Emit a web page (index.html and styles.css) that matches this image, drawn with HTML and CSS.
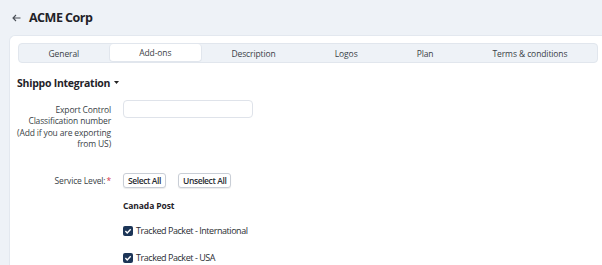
FILE: index.html
```html
<!DOCTYPE html>
<html lang="en">
<head>
  <meta charset="UTF-8">
  <meta name="viewport" content="width=device-width, initial-scale=1.0">
  <title>ACME Corp</title>
  <link rel="stylesheet" href="styles.css">
</head>
<body>
  <header class="page-head">
    <a class="back" href="#">
      <svg width="9" height="8" viewBox="0 0 9 8"><path d="M8.5 4H1M4 1L1 4l3 3" fill="none" stroke="#4a4f57" stroke-width="1.1"/></svg>
    </a>
    <h1>ACME Corp</h1>
  </header>

  <div class="card">
    <nav class="tabs">
      <a class="tab" href="#">General</a>
      <a class="tab active" href="#">Add-ons</a>
      <a class="tab" href="#">Description</a>
      <a class="tab" href="#">Logos</a>
      <a class="tab" href="#">Plan</a>
      <a class="tab" href="#">Terms &amp; conditions</a>
    </nav>

    <h2 class="section-title">Shippo Integration
      <svg width="5" height="4" viewBox="0 0 5 4"><path d="M0 0h5L2.5 3z" fill="#222"/></svg>
    </h2>

    <div class="form">
      <div class="row">
        <label class="label">Export Control<br>Classification number<br>(Add if you are exporting<br>from US)</label>
        <div class="field"><input class="input" type="text"></div>
      </div>

      <div class="row row-service">
        <label class="label">Service Level:<span class="req">*</span></label>
        <div class="field">
          <div class="btns">
            <button class="btn">Select All</button>
            <button class="btn">Unselect All</button>
          </div>
          <div class="carrier">Canada Post</div>
          <label class="check"><span class="box"><svg width="10" height="10" viewBox="0 0 10 10"><rect width="10" height="10" rx="2" fill="#1c3557"/><path d="M2.4 5.1l1.8 1.8 3.5-3.7" fill="none" stroke="#fff" stroke-width="1.4"/></svg></span>Tracked Packet - International</label>
          <label class="check"><span class="box"><svg width="10" height="10" viewBox="0 0 10 10"><rect width="10" height="10" rx="2" fill="#1c3557"/><path d="M2.4 5.1l1.8 1.8 3.5-3.7" fill="none" stroke="#fff" stroke-width="1.4"/></svg></span>Tracked Packet - USA</label>
        </div>
      </div>
    </div>
  </div>
</body>
</html>
```

FILE: styles.css
```css
/* Basis */
* { box-sizing: border-box; }

body {
  margin: 0;
  background-color: #eef2f7;
  font-family: "Open Sans", "Noto Sans", sans-serif;
  color: #2a2d33;
  overflow: hidden;
}

/* Hlavička */
.page-head {
  display: flex;
  align-items: center;
  height: 35px;
  padding: 0 0 0 12px;
}
.page-head .back {
  display: flex;
  margin-right: 8px;
}
.page-head h1 {
  margin: 0;
  font-size: 12.5px;
  font-weight: 700;
  letter-spacing: -0.5px;
  color: #1f2228;
}

/* Karta */
.card {
  margin-left: 9px;
  background-color: #fff;
  border: 1px solid #e3e8ef;
  border-right: 0;
  border-radius: 6px 0 0 0;
  padding: 7px 4px 20px 8px;
  min-height: 240px;
}

/* Záložky */
.tabs {
  display: flex;
  height: 20px;
  background-color: #eef2f7;
  border: 1px solid #e1e6ed;
  border-radius: 4px;
}
.tab {
  flex: 1 1 auto;
  display: flex;
  align-items: center;
  justify-content: center;
  padding: 0 20px;
  font-size: 8.5px;
  color: #3a3f47;
  text-decoration: none;
  white-space: nowrap;
  letter-spacing: -0.1px;
}
.tab.active {
  background-color: #fff;
  border: 1px solid #e1e6ed;
  border-top: 0;
  border-radius: 4px;
}

/* Sekcia */
.section-title {
  display: flex;
  align-items: center;
  gap: 4px;
  margin: 13px 0 0 -1px;
  font-size: 10.5px;
  font-weight: 700;
  letter-spacing: -0.25px;
  color: #1f2228;
}

/* Formulár */
.form {
  margin: 10px 0 0 -7px;
}
.row {
  display: grid;
  grid-template-columns: 100px 1fr;
  column-gap: 12px;
}
.label {
  text-align: right;
  white-space: nowrap;
  font-size: 8.5px;
  line-height: 11.4px;
  color: #3a3f47;
  letter-spacing: -0.15px;
  padding-top: 4px;
}
.req { color: #d2334a; margin-left: 1px; }

.input {
  display: block;
  width: 130px;
  height: 18px;
  border: 1px solid #dfe3ea;
  border-radius: 4px;
  background: #fff;
}

.row-service {
  margin-top: 23px;
}
.row-service .label {
  padding-top: 2px;
}

.btns {
  display: flex;
  gap: 12px;
}
.btn {
  height: 15px;
  padding: 0 4px;
  font-family: inherit;
  font-size: 8.5px;
  font-weight: 600;
  letter-spacing: -0.4px;
  color: #2a2d33;
  background: #fff;
  border: 1px solid #c9ced6;
  border-radius: 3px;
  box-shadow: 0 1px 1px rgba(0, 0, 0, 0.08);
}

.carrier {
  margin-top: 12px;
  font-size: 8.5px;
  font-weight: 700;
  letter-spacing: -0.1px;
  color: #1f2228;
}

.check {
  display: flex;
  align-items: center;
  gap: 3px;
  margin-top: 14px;
  font-size: 9px;
  line-height: 12px;
  letter-spacing: -0.45px;
  color: #2a2d33;
}
.check + .check { margin-top: 15px; }
.check .box { display: flex; }
```
